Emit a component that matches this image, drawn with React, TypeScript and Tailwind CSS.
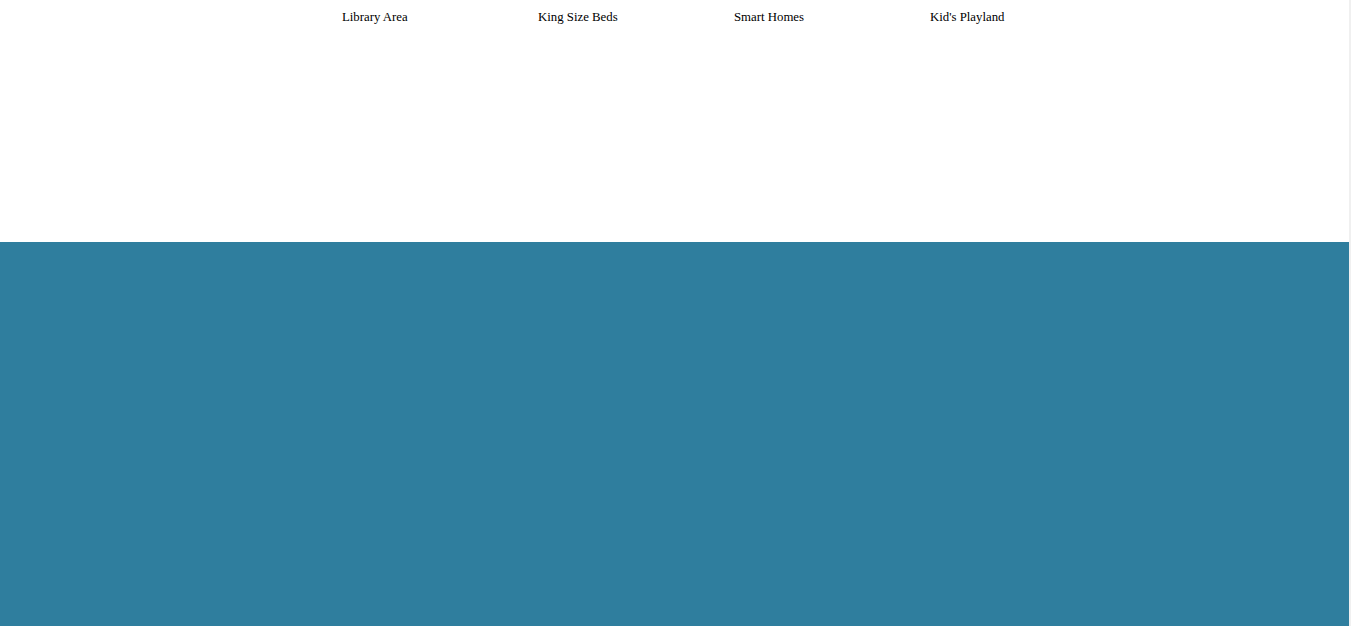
const features = ["Library Area", "King Size Beds", "Smart Homes", "Kid's Playland"];

export default function App() {
  return (
    <div className="flex min-h-[626px] w-full bg-white">
      <div className="flex flex-1 flex-col">
        {/* Feature list */}
        <div className="h-[242px] bg-white">
          <ul className="flex pl-[342px] pt-[9px] font-['Liberation_Serif',serif] text-[12.8px] leading-[16px] text-black">
            {features.map((f) => (
              <li key={f} className="w-[196px] shrink-0">
                {f}
              </li>
            ))}
          </ul>
        </div>

        {/* Teal band */}
        <div className="flex-1 bg-[#2f7e9e]" />
      </div>
      <div className="w-[2px] shrink-0 bg-[#f0f0f0]" />
    </div>
  );
}
